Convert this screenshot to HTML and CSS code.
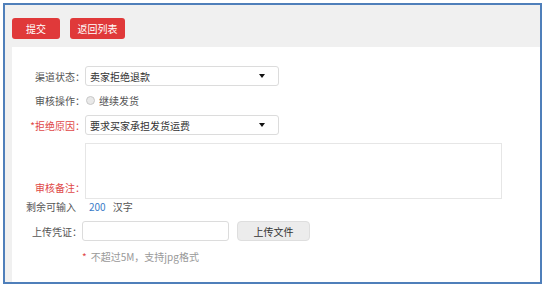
FILE: index.html
```html
<!DOCTYPE html>
<html lang="zh">
<head>
<meta charset="utf-8">
<link rel="stylesheet" href="styles.css">
</head>
<body>
<div class="frame">
  <div class="toolbar">
    <button class="btn btn-red btn-submit">提交</button>
    <button class="btn btn-red btn-back">返回列表</button>
  </div>
  <div class="content">
    <div class="row row-1">
      <div class="label">渠道状态：</div>
      <div class="select"><span>卖家拒绝退款</span><i class="arrow"></i></div>
    </div>
    <div class="row row-2">
      <div class="label">审核操作：</div>
      <div class="radio-wrap"><span class="radio"></span><span class="radio-text">继续发货</span></div>
    </div>
    <div class="row row-3">
      <div class="label label-red">*拒绝原因：</div>
      <div class="select"><span>要求买家承担发货运费</span><i class="arrow"></i></div>
    </div>
    <div class="row row-4">
      <div class="label label-red">审核备注：</div>
      <div class="textarea"></div>
    </div>
    <div class="row row-5">
      <span class="remain">剩余可输入</span><span class="count">200</span><span class="unit">汉字</span>
    </div>
    <div class="row row-6">
      <div class="label label-up">上传凭证：</div>
      <div class="file-input"></div>
      <div class="upload-btn">上传文件</div>
    </div>
    <div class="row row-7">
      <span class="star">*</span><span class="hint">不超过5M，支持jpg格式</span>
    </div>
  </div>
</div>
</body>
</html>
```

FILE: styles.css
```css
html, body {
  margin: 0;
  padding: 0;
  background: #ffffff;
}
body {
  font-family: "Noto Sans CJK SC", "Noto Sans", sans-serif;
  font-size: 10px;
  color: #555;
}
.frame {
  margin: 3px 0 0 3px;
  width: 539px;
  height: 281px;
  box-sizing: border-box;
  border: 2px solid #4f7fba;
  background: #f0f0f0;
  padding-left: 7px;
  display: flex;
  flex-direction: column;
}
.toolbar {
  height: 42px;
  box-sizing: border-box;
  padding-top: 13px;
  display: flex;
  gap: 10px;
}
.btn {
  height: 21px;
  border: none;
  border-radius: 3px;
  font-family: inherit;
  font-size: 10px;
  color: #fff;
  padding: 0;
  line-height: 21px;
}
.btn-red { background: #e0393a; }
.btn-submit { width: 48px; }
.btn-back { width: 55px; }
.content {
  flex: 1;
  background: #fff;
  padding-top: 19px;
  display: flex;
  flex-direction: column;
}
.row {
  display: flex;
  align-items: center;
}
.label {
  width: 73px;
  text-align: right;
  white-space: nowrap;
  color: #555;
}
.label-red { color: #e04848; }
.select {
  width: 194px;
  height: 20px;
  box-sizing: border-box;
  border: 1px solid #dcdcdc;
  border-radius: 3px;
  padding-left: 4px;
  display: flex;
  align-items: center;
  justify-content: space-between;
  color: #333;
}
.arrow {
  width: 0;
  height: 0;
  border-left: 3px solid transparent;
  border-right: 3px solid transparent;
  border-top: 4px solid #111;
  margin-right: 13px;
}
.row-1 { height: 20px; }
.row-2 { height: 20px; margin-top: 4px; }
.radio-wrap {
  display: flex;
  align-items: center;
}
.radio {
  width: 9px;
  height: 9px;
  box-sizing: border-box;
  border-radius: 50%;
  border: 1px solid #c8c8c8;
  background: #e9e9e9;
  margin-left: 1px;
}
.radio-text {
  margin-left: 4px;
  color: #555;
}
.row-3 { height: 20px; margin-top: 5px; }
.row-4 {
  margin-top: 8px;
  align-items: flex-end;
}
.row-4 .label { line-height: 22px; }
.textarea {
  width: 417px;
  height: 56px;
  box-sizing: border-box;
  border: 1px solid #e6e6e6;
}
.row-5 {
  height: 14px;
  margin-top: 0;
  padding-left: 14px;
}
.count {
  margin-left: 13px;
  color: #3a7bc8;
}
.unit {
  margin-left: 7px;
}
.row-6 {
  height: 20px;
  margin-top: 8px;
}
.label-up { width: 70px; }
.file-input {
  width: 147px;
  height: 20px;
  box-sizing: border-box;
  border: 1px solid #dcdcdc;
  border-radius: 3px;
}
.upload-btn {
  margin-left: 8px;
  width: 73px;
  height: 20px;
  box-sizing: border-box;
  border: 1px solid #dedede;
  border-radius: 4px;
  background: #ececec;
  color: #333;
  display: flex;
  align-items: center;
  justify-content: center;
}
.row-7 {
  height: 14px;
  margin-top: 8px;
  padding-left: 70px;
}
.star {
  color: #e04848;
  margin-right: 4px;
}
.hint { color: #999; }
```
